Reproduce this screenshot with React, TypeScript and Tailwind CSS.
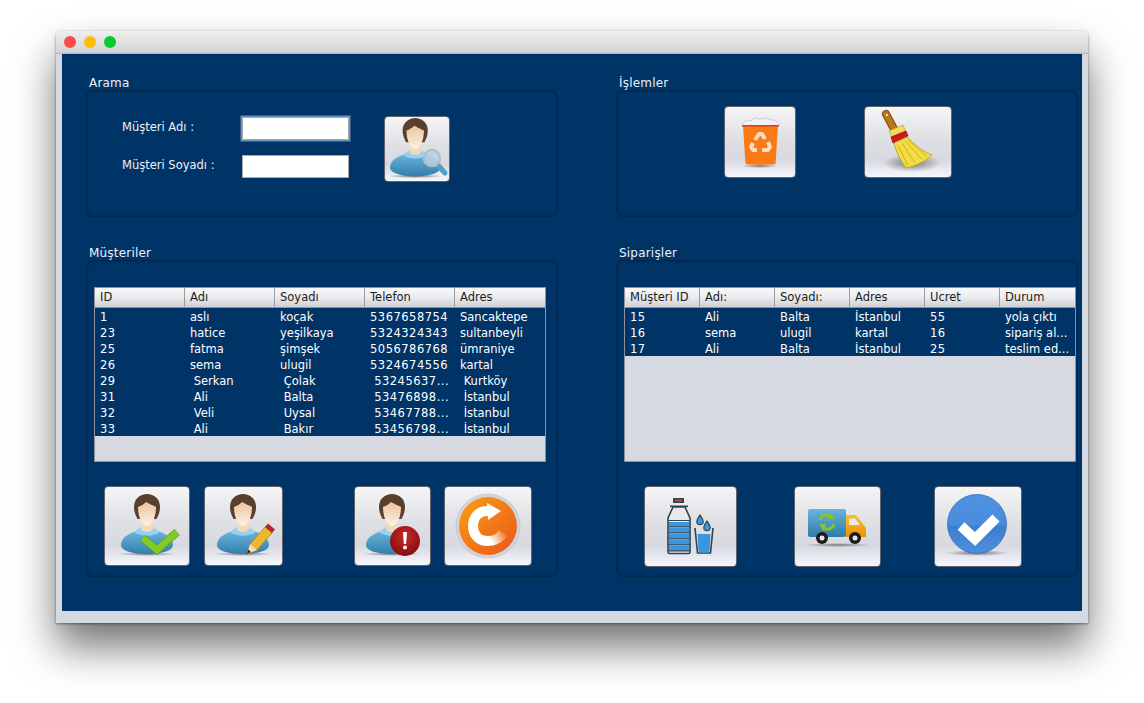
import React from 'react';

const customers = [
  ['1', 'aslı', 'koçak', '5367658754', 'Sancaktepe'],
  ['23', 'hatice', 'yeşilkaya', '5324324343', 'sultanbeyli'],
  ['25', 'fatma', 'şimşek', '5056786768', 'ümraniye'],
  ['26', 'sema', 'ulugil', '5324674556', 'kartal'],
  ['29', ' Serkan', ' Çolak', ' 53245637...', ' Kurtköy'],
  ['31', ' Ali', ' Balta', ' 53476898...', ' İstanbul'],
  ['32', ' Veli', ' Uysal', ' 53467788...', ' İstanbul'],
  ['33', ' Ali', ' Bakır', ' 53456798...', ' İstanbul'],
];

const orders = [
  ['15', 'Ali', 'Balta', 'İstanbul', '55', 'yola çıktı'],
  ['16', 'sema', 'ulugil', 'kartal', '16', 'sipariş al...'],
  ['17', 'Ali', 'Balta', 'İstanbul', '25', 'teslim ed...'],
];

function Panel({ title, className, children }: { title: string; className: string; children: React.ReactNode }) {
  return (
    <section>
      <h2 className="h-[14px] pl-[3px] text-[12px] leading-[14px] tracking-[0.2px] text-[#eef1f6] font-normal">{title}</h2>
      <div className={`rounded-[6px] border border-[#00284f] shadow-[inset_0_0_3px_#00264f] ${className}`}>
        {children}
      </div>
    </section>
  );
}

function DataTable({ cols, headers, rows }: { cols: string; headers: string[]; rows: string[][] }) {
  return (
    <div className="flex h-[175px] flex-col border border-[#8d929c] bg-[#d6d9e2]">
      <div className={`grid h-[20px] ${cols} border-b border-[#8d929c] bg-[linear-gradient(#f8f8f9,#ecedef_45%,#cfd0d5)]`}>
        {headers.map((h) => (
          <div key={h} className="truncate border-r border-[#9a9ca3] pl-[5px] text-[11.5px] leading-[19px] text-[#1c1c1c] last:border-r-0">
            {h}
          </div>
        ))}
      </div>
      <div className="bg-[#003366]">
        {rows.map((row) => (
          <div key={row[0]} className={`grid h-[16px] ${cols}`}>
            {row.map((cell, i) => (
              <div
                key={i}
                className={`overflow-hidden whitespace-pre pl-[5px] text-[11.5px] leading-[18px] text-white ${/^\s*\d/.test(cell) ? 'tracking-[0.5px]' : 'tracking-[0px]'}`}
              >
                {cell}
              </div>
            ))}
          </div>
        ))}
      </div>
    </div>
  );
}

function IconButton({ className, box, children }: { className: string; box: string; children: React.ReactNode }) {
  return (
    <button className={`shrink-0 rounded-[4px] border border-[#5f646e] bg-[linear-gradient(#f5f5f7,#dfe0e4_45%,#d7d9e0_75%,#f6f7fd)] ${className}`}>
      <svg viewBox={box} className="block h-full w-full">
        {children}
      </svg>
    </button>
  );
}

function Person({ id, x, y, scale = 1 }: { id: string; x: number; y: number; scale?: number }) {
  return (
    <g transform={`translate(${x} ${y}) scale(${scale})`}>
      <defs>
        <linearGradient id={`${id}-body`} x1="0" y1="0" x2="0" y2="1">
          <stop offset="0" stopColor="#72b8df" />
          <stop offset="1" stopColor="#317fae" />
        </linearGradient>
        <linearGradient id={`${id}-face`} x1="0" y1="0" x2="0" y2="1">
          <stop offset="0" stopColor="#ecc49a" />
          <stop offset="1" stopColor="#fbf2e7" />
        </linearGradient>
        <radialGradient id={`${id}-shadow`}>
          <stop offset="0" stopColor="#777" />
          <stop offset="1" stopColor="#777" stopOpacity="0" />
        </radialGradient>
      </defs>
      <ellipse cx="26" cy="60" rx="29" ry="2" fill={`url(#${id}-shadow)`} />
      <path d="M0 51C0 44 7 40 15 37L21 35H31L37 37C45 40 52 44 52 51C52 57 40 60 26 60C12 60 0 57 0 51Z" fill={`url(#${id}-body)`} />
      <path d="M13 38L20 33H32L39 38C33 43 19 43 13 38Z" fill="#93d3f0" />
      <path d="M20 26H32V35C30 39 22 39 20 35Z" fill="#f3d9b8" />
      <path d="M13 13C13 5 19 0 26 0C33 0 39 5 39 13C39 18 37.5 21 35.5 25H16.5C14.5 21 13 18 13 13Z" fill="#5b3f2e" />
      <path d="M17 13C20 12 23 10 25 8C29 10 33 12 35 13C35 23 31 32 26 32C21 32 17 23 17 13Z" fill={`url(#${id}-face)`} />
    </g>
  );
}

function Shadow({ id, cx, cy, rx, ry }: { id: string; cx: number; cy: number; rx: number; ry: number }) {
  return (
    <>
      <defs>
        <radialGradient id={id}>
          <stop offset="0" stopColor="#6b6b6b" stopOpacity="0.9" />
          <stop offset="1" stopColor="#6b6b6b" stopOpacity="0" />
        </radialGradient>
      </defs>
      <ellipse cx={cx} cy={cy} rx={rx} ry={ry} fill={`url(#${id})`} />
    </>
  );
}

function SearchIcon() {
  return (
    <IconButton className="h-[66px] w-[66px]" box="0 0 64 64">
      <Person id="search" x={5} y={1} scale={0.97} />
      <path d="M53 48L60 56" stroke="#4f9fcb" strokeWidth="5" strokeLinecap="round" />
      <circle cx="47" cy="41" r="8" fill="#b5d4e4" fillOpacity="0.85" stroke="#b9bdc2" strokeWidth="2.5" />
    </IconButton>
  );
}

function TrashIcon() {
  return (
    <IconButton className="h-[72px] w-[72px]" box="0 0 70 70">
      <Shadow id="trash-s" cx={35} cy={59} rx={18} ry={2} />
      <path d="M18 16L22 13L26 14L30 11L36 12L41 11L46 13L50 13L54 17V19H17Z" fill="#f3f3f5" stroke="#b5b6ba" strokeWidth="0.6" />
      <path d="M18 19H53L50.5 57C50 58 21 58 20.5 57Z" fill="#f97a16" />
      <rect x="17" y="18" width="37" height="1.5" fill="#d93b20" />
      <g fill="none" stroke="#fbd9bd" strokeWidth="4" strokeLinejoin="round">
        <path d="M30 33L34 27H37L40 32" />
        <path d="M43 35L45 40L43 43H37" />
        <path d="M32 43H28L26 40L28 36" />
      </g>
    </IconButton>
  );
}

function BroomIcon() {
  return (
    <IconButton className="h-[72px] w-[88px]" box="0 0 86 70">
      <Shadow id="broom-s" cx={47} cy={56} rx={29} ry={9} />
      <path d="M21 7L29 22" stroke="#7a4a10" strokeWidth="8" strokeLinecap="round" />
      <path d="M21 7L29 22" stroke="#b9771f" strokeWidth="6" strokeLinecap="round" />
      <circle cx="22" cy="8" r="1" fill="#fff" />
      <path d="M24 24L38 18L41 25L27 31Z" fill="#f0dc5a" stroke="#c9a822" strokeWidth="0.7" />
      <path d="M26 30L41 24L43 29L28 36Z" fill="#d4151c" stroke="#8f0d10" strokeWidth="0.7" />
      <path d="M29 36L42 30C50 38 58 45 67 48C60 55 50 59 41 61C36 54 31 45 29 36Z" fill="#f3dd45" stroke="#b59c17" strokeWidth="0.8" />
      <path d="M33 38L43 59M37 36L50 56M40 34L57 52M43 33L62 50" stroke="#c4a81e" strokeWidth="0.8" fill="none" />
    </IconButton>
  );
}

function CheckPersonIcon() {
  return (
    <IconButton className="h-[80px] w-[86px]" box="0 0 84 78">
      <Person id="add" x={16} y={7} />
      <path d="M38 51L52 63L72 45" fill="none" stroke="#5f9e1b" strokeWidth="8" strokeLinejoin="miter" />
      <path d="M38 51L52 63L72 45" fill="none" stroke="#82c92c" strokeWidth="6.5" strokeLinejoin="miter" />
    </IconButton>
  );
}

function PencilPersonIcon() {
  return (
    <IconButton className="h-[80px] w-[79px]" box="0 0 77 78">
      <Person id="edit" x={12} y={7} />
      <path d="M42 67L45 57L60 40L67 46L52 63Z" fill="#eeb72f" stroke="#a9790f" strokeWidth="0.7" />
      <path d="M42 67L45 57L52 63Z" fill="#f1dcb6" />
      <path d="M42 67L43 62.5L46 65Z" fill="#222" />
      <path d="M60 40L63 36.5L70 42.5L67 46Z" fill="#b3262b" />
    </IconButton>
  );
}

function AlertPersonIcon() {
  return (
    <IconButton className="h-[80px] w-[77px]" box="0 0 75 78">
      <defs>
        <radialGradient id="alert-g" cy="0.35" r="0.75">
          <stop offset="0" stopColor="#c82a2a" />
          <stop offset="1" stopColor="#7d0808" />
        </radialGradient>
      </defs>
      <Person id="del" x={11} y={7} />
      <circle cx="50" cy="54" r="15" fill="url(#alert-g)" />
      <path d="M48 45H52L51.2 57H48.8Z" fill="#fff" />
      <circle cx="50" cy="60.5" r="2" fill="#fff" />
    </IconButton>
  );
}

function RefreshIcon() {
  return (
    <IconButton className="h-[80px] w-[88px]" box="0 0 86 78">
      <defs>
        <linearGradient id="refresh-g" x1="0" y1="0" x2="1" y2="1">
          <stop offset="0" stopColor="#fb9e12" />
          <stop offset="1" stopColor="#e9561d" />
        </linearGradient>
        <linearGradient id="refresh-fade" gradientUnits="userSpaceOnUse" x1="46" y1="54" x2="60" y2="46">
          <stop offset="0" stopColor="#fff" />
          <stop offset="1" stopColor="#fff" stopOpacity="0.1" />
        </linearGradient>
      </defs>
      <circle cx="43" cy="39" r="32" fill="#d3d4d9" stroke="#bcbdc3" strokeWidth="0.6" />
      <circle cx="43" cy="39" r="29" fill="url(#refresh-g)" />
      <path d="M44 24C34 23 28 30 28 39C28 48 34 54 43 54" fill="none" stroke="#fff" strokeWidth="10" />
      <path d="M43 54C50 54 55 51 58 46" fill="none" stroke="url(#refresh-fade)" strokeWidth="10" />
      <path d="M42 16L56 24L43 33Z" fill="#fff" />
    </IconButton>
  );
}

function BottleIcon() {
  const bands = [35, 41, 47, 53, 59];
  return (
    <IconButton className="h-[81px] w-[93px]" box="0 0 91 79">
      <rect x="28" y="11" width="11" height="5" rx="0.5" fill="#2f4254" />
      <rect x="30" y="12.5" width="7" height="2" fill="#e53b35" />
      <rect x="25" y="18.5" width="18" height="1.6" fill="#2f4254" />
      <path d="M28 20H40L45 31V65C45 66 44 66.5 43.5 66.5H24.5C24 66.5 23 66 23 65V31Z" fill="#e8e8ea" stroke="#2f4254" strokeWidth="1.6" />
      {bands.map((y) => (
        <rect key={y} x="24" y={y} width="20" height="4.6" fill="#3a97dc" />
      ))}
      <path d="M23 33.5H45M23 39.8H45M23 45.8H45M23 51.8H45M23 57.8H45M23 63.8H45" stroke="#2f4254" strokeWidth="1.2" />
      <path d="M50 41L52.5 66H65.5L68 41" fill="none" stroke="#2f4254" strokeWidth="1.6" />
      <path d="M52.5 47H65.5L64.5 65.5H53.5Z" fill="#3a97dc" />
      <path d="M55 28C53 31 51.8 32.5 51.8 34.4C51.8 36.2 53.2 37.6 55 37.6C56.8 37.6 58.2 36.2 58.2 34.4C58.2 32.5 57 31 55 28Z" fill="#3a97dc" stroke="#2f4254" strokeWidth="1.2" />
      <path d="M62 34C60 37 58.8 38.5 58.8 40.4C58.8 42.2 60.2 43.6 62 43.6C63.8 43.6 65.2 42.2 65.2 40.4C65.2 38.5 64 37 62 34Z" fill="#3a97dc" stroke="#2f4254" strokeWidth="1.2" />
    </IconButton>
  );
}

function TruckIcon() {
  return (
    <IconButton className="h-[81px] w-[87px]" box="0 0 85 79">
      <defs>
        <linearGradient id="truck-box" x1="0" y1="0" x2="0" y2="1">
          <stop offset="0" stopColor="#69b4e0" />
          <stop offset="1" stopColor="#2f7da6" />
        </linearGradient>
        <linearGradient id="truck-cab" x1="0" y1="0" x2="0" y2="1">
          <stop offset="0" stopColor="#fbc02a" />
          <stop offset="1" stopColor="#ed8f07" />
        </linearGradient>
      </defs>
      <Shadow id="truck-s" cx={43} cy={58} rx={33} ry={2} />
      <rect x="13" y="22" width="38" height="28" rx="2" fill="url(#truck-box)" />
      <path d="M51 28H61L71 41V50H51Z" fill="url(#truck-cab)" />
      <path d="M54 31.5H60L65 38H54Z" fill="#e9e9ee" />
      <path d="M25 33C26 28 33 26 37 30" fill="none" stroke="#86c62d" strokeWidth="3" />
      <path d="M35 25.5L40 32H33Z" fill="#86c62d" />
      <path d="M39 37C38 42 31 44 27 40" fill="none" stroke="#86c62d" strokeWidth="3" />
      <path d="M24 37H31L29 44.5Z" fill="#86c62d" />
      <circle cx="27" cy="51" r="6" fill="#1c1c1c" />
      <circle cx="27" cy="51" r="2.5" fill="#e6e6e6" />
      <circle cx="60" cy="51" r="6" fill="#1c1c1c" />
      <circle cx="60" cy="51" r="2.5" fill="#e6e6e6" />
    </IconButton>
  );
}

function ConfirmIcon() {
  return (
    <IconButton className="h-[81px] w-[88px]" box="0 0 86 79">
      <defs>
        <linearGradient id="confirm-g" x1="0" y1="0" x2="0" y2="1">
          <stop offset="0" stopColor="#4f92e2" />
          <stop offset="0.5" stopColor="#4a8ddd" />
          <stop offset="0.55" stopColor="#3c7dd0" />
          <stop offset="1" stopColor="#4e8fdd" />
        </linearGradient>
      </defs>
      <Shadow id="confirm-s" cx={42} cy={66} rx={32} ry={3} />
      <circle cx="42" cy="37" r="29.5" fill="url(#confirm-g)" stroke="#2f6fc0" strokeWidth="0.8" />
      <path d="M26 39L40 52L61 31" fill="none" stroke="#fff" strokeWidth="10" />
    </IconButton>
  );
}

export default function App() {
  return (
    <div className="min-h-[703px] bg-white pl-[56px] pt-[31px] font-['DejaVu_Sans',sans-serif]">
      <div className="w-[1032px] overflow-hidden rounded-t-[5px] shadow-[0_24px_42px_rgba(0,0,0,0.55),0_1px_3px_rgba(0,0,0,0.45)]">
        <div className="flex h-[23px] items-center gap-[8px] border-b border-[#b5b5b5] bg-[linear-gradient(#efefef,#d2d2d2)] pl-[8px]">
          <span className="h-[12px] w-[12px] rounded-full bg-[#fc4a4a]" />
          <span className="h-[12px] w-[12px] rounded-full bg-[#fdbb0c]" />
          <span className="h-[12px] w-[12px] rounded-full bg-[#0ac92c]" />
        </div>
        <div className="bg-[#d6d9e2] px-[6px] pb-[12px]">
          <div className="grid h-[557px] grid-cols-[472px_462px] grid-rows-[170px_auto] gap-x-[58px] bg-[#003366] pl-[24px] pt-[22px]">
            <Panel title="Arama" className="flex h-[127px] pl-[35px] pt-[25px]">
              <div className="flex w-[120px] flex-col gap-[19px] pt-[2px] text-[11.5px] leading-[19px] text-[#eef1f6]">
                <span>Müşteri Adı :</span>
                <span>Müşteri Soyadı :</span>
              </div>
              <div className="flex flex-col gap-[15px] pt-[1px]">
                <input className="h-[23px] w-[107px] border border-[#a8a8a8] bg-white shadow-[0_0_0_1.5px_#6690bd]" />
                <input className="h-[23px] w-[107px] border border-[#a8a8a8] bg-white" />
              </div>
              <div className="ml-[35px]">
                <SearchIcon />
              </div>
            </Panel>
            <Panel title="İşlemler" className="flex h-[127px] gap-[68px] pl-[107px] pt-[15px]">
              <TrashIcon />
              <BroomIcon />
            </Panel>
            <Panel title="Müşteriler" className="h-[317px] pl-[7px] pr-[11px] pt-[26px]">
              <DataTable cols="grid-cols-5" headers={['ID', 'Adı', 'Soyadı', 'Telefon', 'Adres']} rows={customers} />
              <div className="mt-[24px] flex pl-[10px]">
                <CheckPersonIcon />
                <div className="ml-[14px]">
                  <PencilPersonIcon />
                </div>
                <div className="ml-[71px]">
                  <AlertPersonIcon />
                </div>
                <div className="ml-[13px]">
                  <RefreshIcon />
                </div>
              </div>
            </Panel>
            <Panel title="Siparişler" className="h-[317px] pl-[7px] pr-[1px] pt-[26px]">
              <DataTable cols="grid-cols-6" headers={['Müşteri ID', 'Adı:', 'Soyadı:', 'Adres', 'Ucret', 'Durum']} rows={orders} />
              <div className="mt-[24px] flex pl-[20px]">
                <BottleIcon />
                <div className="ml-[57px]">
                  <TruckIcon />
                </div>
                <div className="ml-[53px]">
                  <ConfirmIcon />
                </div>
              </div>
            </Panel>
          </div>
        </div>
      </div>
    </div>
  );
}
